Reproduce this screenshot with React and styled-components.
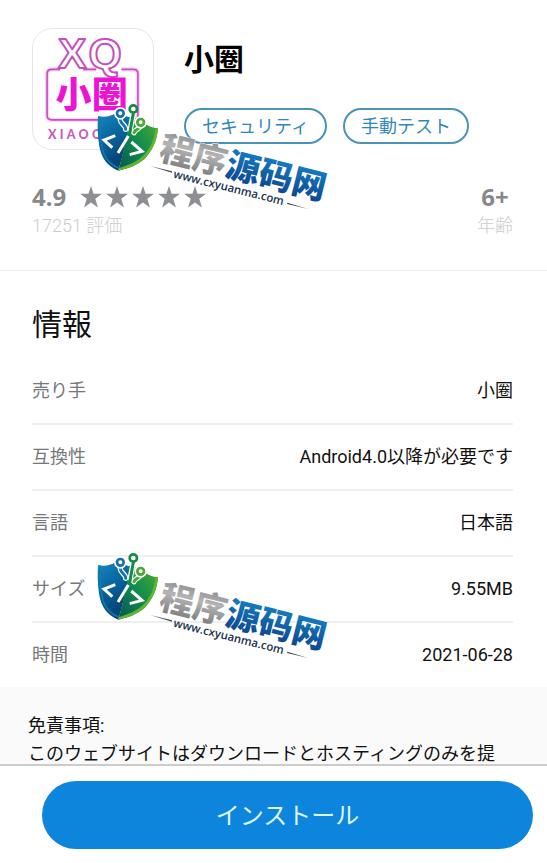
import styled, { createGlobalStyle } from "styled-components";

const GlobalStyle = createGlobalStyle`
  * {
    box-sizing: border-box;
  }

  body {
    margin: 0;
    background-color: #ffffff;
    color: #111111;
    font-family: Roboto, "Noto Sans CJK JP", sans-serif;
  }
`;

const Page = styled.div`
  display: flex;
  flex-direction: column;
  height: 100vh;
`;

const Content = styled.main`
  position: relative;
  flex: 1;
  min-height: 0;
  overflow-y: auto;
  scrollbar-width: none;
`;

const Summary = styled.header`
  padding: 28px 34px 30px 32px;
  border-bottom: 1px solid #ebebeb;
`;

const AppHead = styled.div`
  display: flex;
  gap: 30px;
  margin-bottom: 32px;
`;

const AppIcon = styled.svg`
  flex: none;
  width: 122px;
  height: 122px;
  border: 1px solid #e6e6e6;
  border-radius: 20px;
`;

const AppTitle = styled.div`
  display: flex;
  flex-direction: column;
  justify-content: space-between;
  padding: 12px 0 6px;

  h1 {
    margin: 0;
    font-size: 30px;
    line-height: 40px;
    font-weight: bold;
    color: #000000;
  }
`;

const Tags = styled.div`
  display: flex;
  gap: 16px;
`;

const Tag = styled.span`
  height: 36px;
  padding: 0 16px;
  border: 2px solid #4a93b8;
  border-radius: 18px;
  color: #3288b8;
  font-size: 18px;
  line-height: 34px;
  white-space: nowrap;
`;

const Stats = styled.div`
  display: flex;
  justify-content: space-between;
`;

const Stat = styled.div`
  text-align: ${(props) => props.$align || "left"};

  .value {
    display: flex;
    align-items: center;
    justify-content: ${(props) =>
      props.$align === "center" ? "center" : "flex-start"};
    gap: 14px;
    color: #87888b;
    font-family: "Noto Sans", sans-serif;
    font-size: 24px;
    font-weight: bold;
    line-height: 30px;
  }

  .caption {
    color: #cccccc;
    font-size: 18px;
    font-weight: 300;
    line-height: 28px;
  }
`;

const Stars = styled.div`
  display: flex;
  gap: 4px;

  svg {
    width: 22px;
    height: 22px;
    fill: #8e8f93;
  }
`;

const Info = styled.section`
  padding: 32px 34px 0 32px;

  h2 {
    margin: 0 0 12px;
    font-size: 30px;
    line-height: 44px;
    font-weight: normal;
  }

  dl {
    margin: 0;
  }
`;

const InfoRow = styled.div`
  display: flex;
  justify-content: space-between;
  height: 66px;
  font-size: 18px;
  line-height: 64px;
  border-bottom: 2px solid #efefef;

  &:last-child {
    height: 64px;
    border-bottom: none;
  }

  dt {
    color: #77787b;
  }

  dd {
    margin: 0;
  }
`;

const Disclaimer = styled.section`
  padding: 25px 28px 0;
  background-color: #fafafa;
  font-size: 18px;
  line-height: 28px;

  p {
    margin: 0;
  }
`;

const Footer = styled.footer`
  padding: 15px 14px 14px 42px;
  border-top: 2px solid #cccccc;
`;

const InstallButton = styled.button`
  display: block;
  width: 100%;
  height: 68px;
  padding: 0 0 4px;
  border: none;
  border-radius: 34px;
  background-color: #0d85dc;
  color: #ddf8ff;
  font-family: inherit;
  font-size: 24px;
  cursor: pointer;
`;

const WatermarkSvg = styled.svg`
  position: absolute;
  top: ${(props) => props.$top}px;
  left: 90px;
  width: 250px;
  height: 120px;
  pointer-events: none;
`;

const infoRows = [
  { label: "売り手", value: "小圈" },
  { label: "互換性", value: "Android4.0以降が必要です" },
  { label: "言語", value: "日本語" },
  { label: "サイズ", value: "9.55MB" },
  { label: "時間", value: "2021-06-28" },
];

const Star = () => (
  <svg viewBox="0 0 22 22">
    <path d="M11 0l2.6 7.8H22l-6.7 5 2.6 8.7L11 16.4l-6.9 5.1 2.6-8.7L0 7.8h8.4z" />
  </svg>
);

const Logo = () => (
  <AppIcon viewBox="35 25 366 366" role="img" aria-label="小圈">
    <path
      d="M118 148H92q-14 0-14 14v126q0 14 14 14h249q14 0 14-14V162q0-14-14-14h-36M188 148h40"
      fill="none"
      stroke="#fbd3f4"
      strokeWidth="13"
    />
    <path
      d="M118 148H92q-14 0-14 14v126q0 14 14 14h249q14 0 14-14V162q0-14-14-14h-36M188 148h40"
      fill="none"
      stroke="#c64fc0"
      strokeWidth="5"
    />
    <g
      fontFamily="Liberation Sans, sans-serif"
      fontWeight="bold"
      fontSize="130"
      fill="#fff"
      stroke="#c64fc0"
      strokeWidth="6"
      strokeLinejoin="round"
    >
      <text x="111" y="145">
        X
      </text>
      <text x="204" y="144">
        Q
      </text>
    </g>
    <text
      x="104"
      y="266"
      fontFamily="Noto Sans CJK SC, sans-serif"
      fontWeight="900"
      fontSize="110"
      fill="#ee12d4"
    >
      小圈
    </text>
    <text
      x="81"
      y="361"
      fontFamily="Lato, sans-serif"
      fontWeight="900"
      fontSize="38"
      letterSpacing="10"
      fill="#c65dc3"
    >
      XIAOQUAN
    </text>
  </AppIcon>
);

const Watermark = ({ id, top }) => (
  <WatermarkSvg $top={top} viewBox="0 0 750 360">
    <defs>
      <linearGradient id={`${id}-blue`} x1="0" y1="0" x2="0.4" y2="1">
        <stop offset="0" stopColor="#1688bd" />
        <stop offset="0.5" stopColor="#08649f" />
        <stop offset="1" stopColor="#043f72" />
      </linearGradient>
      <linearGradient id={`${id}-green`} x1="1" y1="0" x2="0" y2="1">
        <stop offset="0" stopColor="#4dad32" />
        <stop offset="0.5" stopColor="#118b4d" />
        <stop offset="1" stopColor="#045652" />
      </linearGradient>
      <linearGradient id={`${id}-silver`} x1="0" y1="0" x2="0" y2="1">
        <stop offset="0" stopColor="#77787b" />
        <stop offset="0.45" stopColor="#b4b4b4" />
        <stop offset="1" stopColor="#6f7073" />
      </linearGradient>
      <linearGradient id={`${id}-name`} x1="0" y1="0" x2="0" y2="1">
        <stop offset="0" stopColor="#1b8bd0" />
        <stop offset="1" stopColor="#073e86" />
      </linearGradient>
    </defs>

    {/* shield */}
    <path
      d="M24 60C44 65 60 61 77 52L118 64C113 122 100 174 85 224C52 211 33 186 27 145C23 116 22 88 24 60Z"
      fill={`url(#${id}-blue)`}
    />
    <path
      d="M117 62L155 72C166 87 184 95 204 97C202 129 189 163 164 188C142 208 114 217 85 224C99 174 112 120 117 62Z"
      fill={`url(#${id}-green)`}
    />
    <path
      d="M196 100C191 135 180 161 158 181C138 199 113 209 85 217V224C114 217 142 208 164 188C189 163 202 129 204 97Z"
      fill="#63b52f"
    />
    <path
      d="M31 68C29 107 31 150 44 178C53 197 68 209 86 216"
      fill="none"
      stroke="#0b7cab"
      strokeWidth="5"
    />

    {/* circuit branches */}
    <g fill="none" strokeLinecap="round">
      <g stroke="#fff" strokeWidth="16">
        <path d="M91 58V72C92 84 108 88 107 100" />
        <path d="M130 52L121 100" />
        <path d="M151 90C147 102 136 98 132 110" />
      </g>
      <g strokeWidth="9">
        <path d="M91 64V72C92 84 108 88 107 100" stroke="#1575b5" />
        <path d="M130 52L120 107" stroke="#168b43" />
        <path d="M151 90C147 102 136 98 132 110" stroke="#49a936" />
      </g>
      <g stroke="#fff" strokeWidth="16">
        <circle cx="91" cy="52" r="11" />
        <circle cx="152" cy="79" r="11" />
      </g>
      <g fill="#fff" strokeWidth="8">
        <circle cx="91" cy="52" r="10" stroke="#146eb2" />
        <circle cx="130" cy="39" r="11" stroke="#168b43" />
        <circle cx="152" cy="79" r="10" stroke="#49a936" />
      </g>
    </g>

    {/* code mark */}
    <path
      d="M76 119L42 132L67 155M115 120L84 171M124 138L156 166L119 176"
      fill="none"
      stroke="#fff"
      strokeWidth="9"
    />

    <g transform="translate(198 193) rotate(14)">
      <g
        fontFamily="Noto Sans CJK SC, sans-serif"
        fontWeight="900"
        stroke="#fff"
        strokeWidth="3"
        paintOrder="stroke"
      >
        <text x="4" y="-5" fontSize="102" fill={`url(#${id}-silver)`}>
          程序
        </text>
        <text x="208" y="-5" fontSize="102" fill={`url(#${id}-name)`}>
          源码网
        </text>
      </g>
      <text
        x="61"
        y="38"
        fontFamily="Open Sans, sans-serif"
        fontWeight="600"
        fontSize="34"
        fill="#15304f"
      >
        www.cxyuanma.com
      </text>
    </g>
    <path d="M180 210L246 226L246 230ZM592 320L655 339L591 324Z" fill="#3d454e" />
  </WatermarkSvg>
);

const App = () => {
  return (
    <Page>
      <GlobalStyle />
      <Content>
        <Summary>
          <AppHead>
            <Logo />
            <AppTitle>
              <h1>小圈</h1>
              <Tags>
                <Tag>セキュリティ</Tag>
                <Tag>手動テスト</Tag>
              </Tags>
            </AppTitle>
          </AppHead>
          <Stats>
            <Stat>
              <div className="value">
                4.9
                <Stars role="img" aria-label="4.9">
                  {[1, 2, 3, 4, 5].map((star) => (
                    <Star key={star} />
                  ))}
                </Stars>
              </div>
              <div className="caption">17251 評価</div>
            </Stat>
            <Stat $align="center">
              <div className="value">6+</div>
              <div className="caption">年齢</div>
            </Stat>
          </Stats>
        </Summary>

        <Info>
          <h2>情報</h2>
          <dl>
            {infoRows.map((row) => (
              <InfoRow key={row.label}>
                <dt>{row.label}</dt>
                <dd>{row.value}</dd>
              </InfoRow>
            ))}
          </dl>
        </Info>

        <Disclaimer>
          <p>免責事項:</p>
          <p>このウェブサイトはダウンロードとホスティングのみを提</p>
        </Disclaimer>

        <Watermark id="mark-top" top={96} />
        <Watermark id="mark-bottom" top={545} />
      </Content>

      <Footer>
        <InstallButton type="button">インストール</InstallButton>
      </Footer>
    </Page>
  );
};

export default App;
